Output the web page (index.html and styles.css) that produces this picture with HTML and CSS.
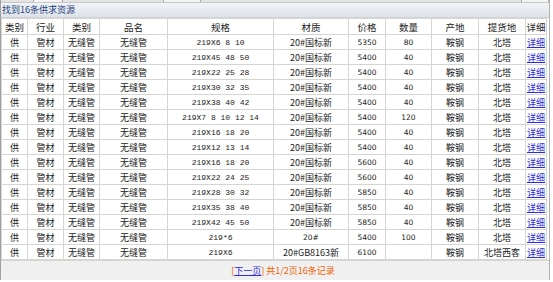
FILE: index.html
```html
<!DOCTYPE html>
<html lang="zh-CN">
<head>
<meta charset="utf-8">
<title>找到16条供求资源</title>
<link rel="stylesheet" href="styles.css">
</head>
<body>
<div class="frame">
  <div class="topstrip"><span class="tb tb1"></span><span class="tb tb2"></span><span class="tb tb3"></span></div>
  <div class="title">找到16条供求资源</div>
  <table class="grid">
    <colgroup>
      <col class="c1"><col class="c2"><col class="c3"><col class="c4"><col class="c5"><col class="c6"><col class="c7"><col class="c8"><col class="c9"><col class="c10"><col class="c11">
    </colgroup>
    <thead>
      <tr><th>类别</th><th>行业</th><th>类别</th><th>品名</th><th>规格</th><th>材质</th><th>价格</th><th>数量</th><th>产地</th><th>提货地</th><th>详细</th></tr>
    </thead>
    <tbody>
      <tr><td>供</td><td>管材</td><td>无缝管</td><td>无缝管</td><td class="spec">219X6 8 10</td><td>20#国标新</td><td class="num">5350</td><td class="num">80</td><td>鞍钢</td><td>北塔</td><td><a href="#">详细</a></td></tr>
      <tr><td>供</td><td>管材</td><td>无缝管</td><td>无缝管</td><td class="spec">219X45 48 50</td><td>20#国标新</td><td class="num">5400</td><td class="num">40</td><td>鞍钢</td><td>北塔</td><td><a href="#">详细</a></td></tr>
      <tr><td>供</td><td>管材</td><td>无缝管</td><td>无缝管</td><td class="spec">219X22 25 28</td><td>20#国标新</td><td class="num">5400</td><td class="num">40</td><td>鞍钢</td><td>北塔</td><td><a href="#">详细</a></td></tr>
      <tr><td>供</td><td>管材</td><td>无缝管</td><td>无缝管</td><td class="spec">219X30 32 35</td><td>20#国标新</td><td class="num">5400</td><td class="num">40</td><td>鞍钢</td><td>北塔</td><td><a href="#">详细</a></td></tr>
      <tr><td>供</td><td>管材</td><td>无缝管</td><td>无缝管</td><td class="spec">219X38 40 42</td><td>20#国标新</td><td class="num">5400</td><td class="num">40</td><td>鞍钢</td><td>北塔</td><td><a href="#">详细</a></td></tr>
      <tr><td>供</td><td>管材</td><td>无缝管</td><td>无缝管</td><td class="spec">219X7 8 10 12 14</td><td>20#国标新</td><td class="num">5400</td><td class="num">120</td><td>鞍钢</td><td>北塔</td><td><a href="#">详细</a></td></tr>
      <tr><td>供</td><td>管材</td><td>无缝管</td><td>无缝管</td><td class="spec">219X16 18 20</td><td>20#国标新</td><td class="num">5400</td><td class="num">40</td><td>鞍钢</td><td>北塔</td><td><a href="#">详细</a></td></tr>
      <tr><td>供</td><td>管材</td><td>无缝管</td><td>无缝管</td><td class="spec">219X12 13 14</td><td>20#国标新</td><td class="num">5400</td><td class="num">40</td><td>鞍钢</td><td>北塔</td><td><a href="#">详细</a></td></tr>
      <tr><td>供</td><td>管材</td><td>无缝管</td><td>无缝管</td><td class="spec">219X16 18 20</td><td>20#国标新</td><td class="num">5600</td><td class="num">40</td><td>鞍钢</td><td>北塔</td><td><a href="#">详细</a></td></tr>
      <tr><td>供</td><td>管材</td><td>无缝管</td><td>无缝管</td><td class="spec">219X22 24 25</td><td>20#国标新</td><td class="num">5600</td><td class="num">40</td><td>鞍钢</td><td>北塔</td><td><a href="#">详细</a></td></tr>
      <tr><td>供</td><td>管材</td><td>无缝管</td><td>无缝管</td><td class="spec">219X28 30 32</td><td>20#国标新</td><td class="num">5850</td><td class="num">40</td><td>鞍钢</td><td>北塔</td><td><a href="#">详细</a></td></tr>
      <tr><td>供</td><td>管材</td><td>无缝管</td><td>无缝管</td><td class="spec">219X35 38 40</td><td>20#国标新</td><td class="num">5850</td><td class="num">40</td><td>鞍钢</td><td>北塔</td><td><a href="#">详细</a></td></tr>
      <tr><td>供</td><td>管材</td><td>无缝管</td><td>无缝管</td><td class="spec">219X42 45 50</td><td>20#国标新</td><td class="num">5850</td><td class="num">40</td><td>鞍钢</td><td>北塔</td><td><a href="#">详细</a></td></tr>
      <tr><td>供</td><td>管材</td><td>无缝管</td><td>无缝管</td><td class="spec">219*6</td><td class="num">20#</td><td class="num">5400</td><td class="num">100</td><td>鞍钢</td><td>北塔</td><td><a href="#">详细</a></td></tr>
      <tr><td>供</td><td>管材</td><td>无缝管</td><td>无缝管</td><td class="spec">219X6</td><td>20#GB8163新</td><td class="num">6100</td><td class="num"></td><td>鞍钢</td><td>北塔西客</td><td><a href="#">详细</a></td></tr>
    </tbody>
  </table>
  <div class="pager"><span class="br">[</span><a href="#">下一页</a><span class="br">]</span> <span class="info">共1/2页16条记录</span></div>
</div>
</body>
</html>
```

FILE: styles.css
```css
html, body {
  margin: 0;
  padding: 0;
  background: #ffffff;
}
body {
  font-family: "Noto Sans CJK SC", "Noto Sans", sans-serif;
  font-size: 9px;
  color: #222;
}
.frame {
  width: 548px;
  height: 279px;
  border-left: 1px solid #a0a0a0;
  border-right: 1px solid #b0b0b0;
  border-bottom: 1px solid #b8b8b8;
  background: #fff;
  display: flex;
  flex-direction: column;
}
.topstrip {
  height: 2px;
  background: #e4e4e4;
  border-bottom: 1px solid #c8c8c8;
  display: flex;
}
.tb {
  display: block;
  height: 2px;
  background: #f4f4f4;
  border-left: 1px solid #aaa;
  border-right: 1px solid #aaa;
}
.tb1 { margin-left: 32px; width: 30px; }
.tb2 { margin-left: 100px; width: 40px; }
.tb3 { margin-left: 320px; width: 28px; }
.title {
  height: 14px;
  line-height: 14px;
  padding-left: 1px;
  background: linear-gradient(#f2f4f7, #dde2e8);
  color: #24427c;
  font-size: 9px;
  border-bottom: 1px solid #cfd4da;
}
.grid {
  width: 545px;
  table-layout: fixed;
  border-collapse: collapse;
}
.c1 { width: 26px; }
.c2 { width: 36px; }
.c3 { width: 36px; }
.c4 { width: 68px; }
.c5 { width: 106px; }
.c6 { width: 75px; }
.c7 { width: 37px; }
.c8 { width: 46px; }
.c9 { width: 47px; }
.c10 { width: 47px; }
.c11 { width: 21px; }
.grid th, .grid td {
  border: 1px solid #d6d6d0;
  text-align: center;
  padding: 0;
  font-weight: normal;
  white-space: nowrap;
  overflow: hidden;
  color: #222;
}
.grid th {
  height: 15px;
  font-size: 9.5px;
}
.grid td {
  height: 14px;
  line-height: 13px;
}
.grid .spec {
  font-family: "Liberation Mono", "DejaVu Sans Mono", monospace;
  font-size: 8px;
}
.grid .num {
  font-family: "DejaVu Sans", "Liberation Sans", sans-serif;
  font-size: 7.5px;
}
.grid a {
  color: #2b2be0;
  text-decoration: underline;
}
.pager {
  flex: none;
  height: 20px;
  line-height: 20px;
  background: #f0f0f0;
  border-top: 1px solid #d6d6d0;
  text-align: center;
  padding-left: 16px;
  color: #f06000;
}
.pager a {
  color: #2b2be0;
  text-decoration: underline;
}
.pager .br, .pager .info {
  color: #f06000;
}
```
